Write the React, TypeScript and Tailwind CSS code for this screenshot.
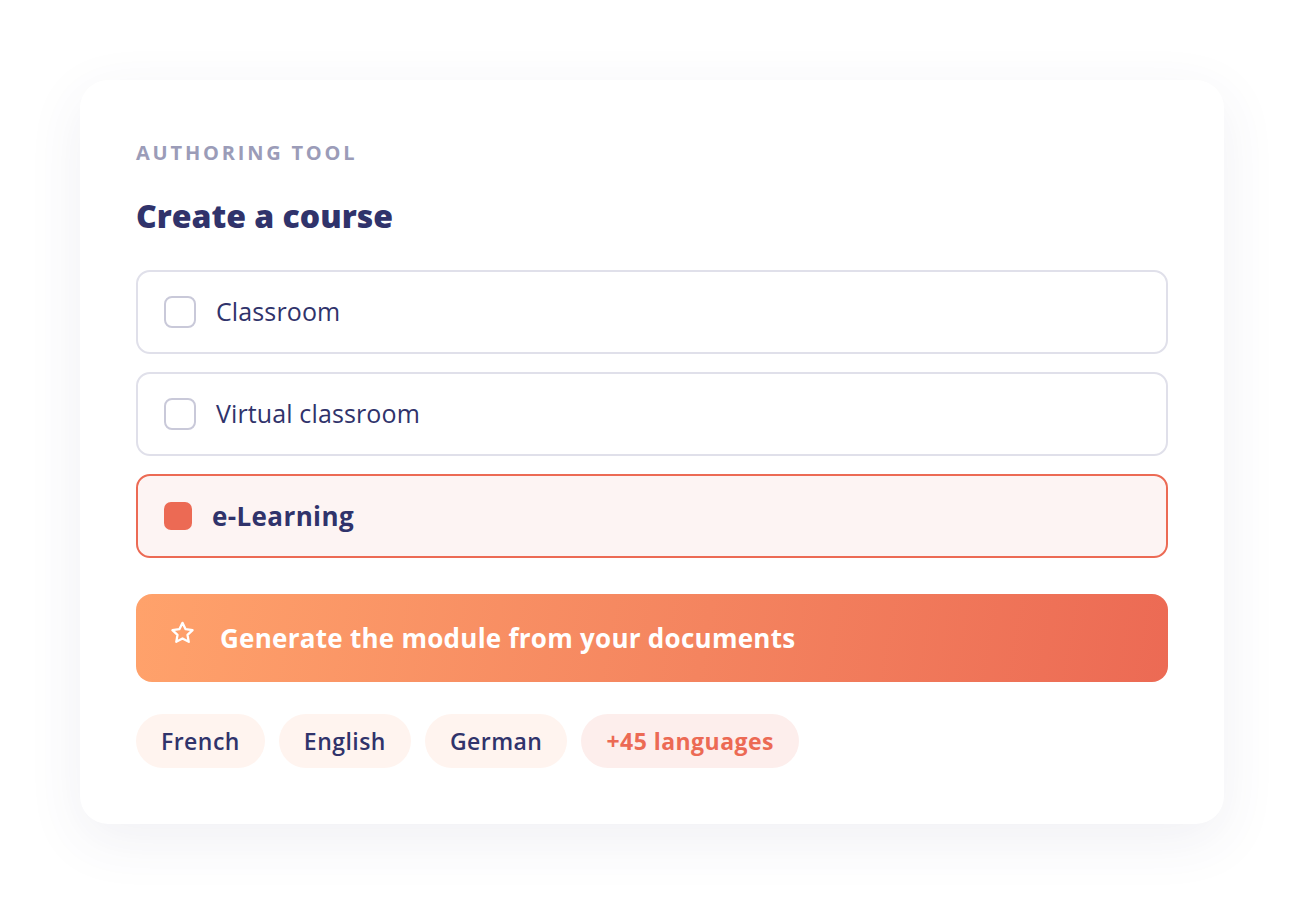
import React from "react";

const options = [
  { label: "Classroom", selected: false },
  { label: "Virtual classroom", selected: false },
  { label: "e-Learning", selected: true },
];

const languages = ["French", "English", "German"];

function StarIcon() {
  return (
    <svg width="25" height="25" viewBox="0 0 24 24" fill="none" stroke="white" strokeWidth="2.2" strokeLinejoin="round">
      <path d="M12 1.8l3 6.1 6.7.9-4.9 4.6 1.2 6.6L12 16.8l-6 3.2 1.2-6.6-4.9-4.6 6.7-.9z" />
    </svg>
  );
}

export default function App() {
  return (
    <div className="min-h-[904px] w-full bg-white flex items-start justify-center pt-[80px]" style={{ fontFamily: '"Open Sans", "Noto Sans", sans-serif' }}>
      <div className="w-[1144px] rounded-[28px] bg-white px-[56px] pt-[59px] pb-[56px] shadow-[0_16px_56px_rgba(60,70,120,0.08)]">
        <div className="text-[20px] font-bold tracking-[0.14em] text-[#9b9cb8] leading-[28px]">AUTHORING TOOL</div>
        <h1 className="mt-[28px] text-[32px] font-extrabold text-[#30336b] leading-[42px]">Create a course</h1>
        <div className="mt-[33px] flex flex-col gap-[18px]">
          {options.map((o) =>
            o.selected ? (
              <div key={o.label} className="h-[84px] rounded-[14px] border-2 border-[#ec6a54] bg-[#fdf4f3] flex items-center pl-[26px]">
                <div className="w-[28px] h-[28px] rounded-[7px] bg-[#ec6a54]" />
                <span className="ml-[20px] text-[26px] font-bold tracking-[0.015em] text-[#30336b]">{o.label}</span>
              </div>
            ) : (
              <div key={o.label} className="h-[84px] rounded-[14px] border-2 border-[#e0e0ea] bg-white flex items-center pl-[26px]">
                <div className="w-[32px] h-[32px] rounded-[8px] border-2 border-[#c9c9d9]" />
                <span className="ml-[20px] text-[25px] tracking-[0.005em] text-[#30336b]">{o.label}</span>
              </div>
            )
          )}
        </div>
        <div className="mt-[36px] h-[88px] rounded-[16px] bg-[linear-gradient(100deg,#ffa26b_0%,#f4845f_55%,#ec6a54_100%)] flex items-center pl-[34px]">
          <div className="-mt-[10px]"><StarIcon /></div>
          <span className="ml-[25px] text-[26px] font-bold tracking-[0.01em] text-white">Generate the module from your documents</span>
        </div>
        <div className="mt-[32px] flex gap-[14px]">
          {languages.map((l) => (
            <div key={l} className="h-[54px] px-[25px] rounded-full bg-[#fff4ef] flex items-center text-[23px] font-semibold tracking-[0.02em] text-[#30336b]">{l}</div>
          ))}
          <div className="h-[54px] px-[25px] rounded-full bg-[#fdeeec] flex items-center text-[23px] font-bold tracking-[0.02em] text-[#ec6a54]">+45 languages</div>
        </div>
      </div>
    </div>
  );
}
